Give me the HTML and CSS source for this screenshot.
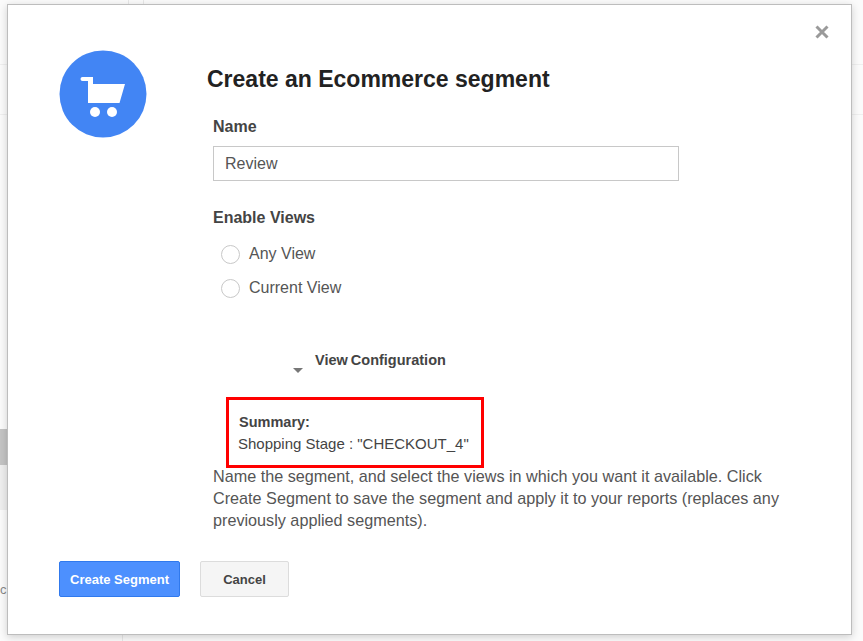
FILE: index.html
```html
<!DOCTYPE html>
<html lang="en">
<head>
<meta charset="utf-8">
<title>Create an Ecommerce segment</title>
<link rel="stylesheet" href="styles.css">
</head>
<body>
<div class="backdrop">
  <div class="bg-line bg-line-a"></div>
  <div class="bg-line bg-line-b"></div>
  <div class="bg-vline bg-vline-a"></div>
  <div class="bg-vline bg-vline-b"></div>
  <div class="bg-vline bg-vline-c"></div>
  <div class="bg-block"></div>
  <div class="bg-panel"></div>
  <span class="bg-letter">c</span>
</div>
<div class="dialog" role="dialog">
  <button class="close" aria-label="Close">
    <svg width="14" height="14" viewBox="0 0 14 14"><path d="M1.5 1.500 12.500 12.500M12.500 1.500 1.500 12.500" stroke="#9a9a9a" stroke-width="3" fill="none"/></svg>
  </button>
  <div class="top">
    <div class="icon-col">
      <svg class="cart" width="88" height="88" viewBox="0 0 88 88">
        <circle cx="44" cy="44" r="43.500" fill="#4285f4"/>
        <path d="M21.500 29a2 2 0 0 1 2-2H34V34H66L60.500 53H29V31H23.500a2 2 0 0 1-2-2Z" fill="#fff"/>
        <circle cx="36" cy="62" r="5" fill="#fff"/>
        <circle cx="53" cy="62" r="5" fill="#fff"/>
      </svg>
    </div>
    <div class="content">
      <h1 class="title">Create an Ecommerce segment</h1>
      <form class="form">
        <label class="field-label" for="name">Name</label>
        <input class="text-input" id="name" value="Review">
        <div class="field-label views-label">Enable Views</div>
        <div class="radio-row"><span class="radio"></span><span>Any View</span></div>
        <div class="radio-row"><span class="radio"></span><span>Current View</span></div>
        <div class="config">
          <span class="caret"></span>
          <span class="config-label">View Configuration</span>
        </div>
        <div class="summary">
          <div class="summary-title">Summary:</div>
          <div class="summary-text">Shopping Stage : "CHECKOUT_4"</div>
        </div>
        <p class="help">Name the segment, and select the views in which you want it available. Click Create Segment to save the segment and apply it to your reports (replaces any previously applied segments).</p>
      </form>
    </div>
  </div>
  <div class="actions">
    <button class="btn btn-primary">Create Segment</button>
    <button class="btn btn-default">Cancel</button>
  </div>
</div>
</body>
</html>
```
FILE: styles.css
```css
* { box-sizing: border-box; }
html, body { margin: 0; height: 100%; }
body {
  position: relative;
  width: 863px;
  height: 641px;
  overflow: hidden;
  background: #fbfbfb;
  font-family: "Liberation Sans", Arial, sans-serif;
  color: #444;
}
.backdrop { position: absolute; inset: 0; }
.bg-line { position: absolute; left: 0; right: 0; height: 1px; background: #efefef; }
.bg-line-a { top: 64px; }
.bg-line-b { top: 114px; }
.bg-vline { position: absolute; width: 1px; background: #e8e8e8; }
.bg-vline-a { left: 128px; top: 0; height: 5px; }
.bg-vline-b { left: 143px; top: 0; height: 5px; }
.bg-vline-c { left: 122px; bottom: 0; height: 8px; }
.bg-block { position: absolute; left: 0; top: 429px; width: 8px; height: 36px; background: #c4c4c4; }
.bg-panel { position: absolute; left: 0; top: 465px; width: 8px; height: 45px; background: #efefef; }
.bg-letter { position: absolute; left: 0; top: 582px; font-size: 13px; color: #888; }
.dialog {
  position: absolute;
  left: 7px;
  top: 4px;
  width: 845px;
  height: 631px;
  background: #fff;
  border: 1px solid #bdbdbd;
  box-shadow: 0 2px 8px rgba(0,0,0,.18);
  padding: 45px 0 0 51px;
}
.close {
  position: absolute;
  top: 20px;
  right: 22px;
  padding: 0;
  border: 0;
  background: none;
  line-height: 0;
}
.top { display: flex; }
.icon-col { width: 148px; flex: none; }
.cart { display: block; }
.content { flex: 1; }
.title {
  margin: 14px 0 0;
  font-size: 23px;
  line-height: 30px;
  font-weight: 700;
  color: #222;
}
.form { padding-left: 6px; }
.field-label {
  display: block;
  margin-top: 23px;
  font-size: 16px;
  line-height: 20px;
  font-weight: 700;
  color: #444;
}
.text-input {
  display: block;
  width: 466px;
  height: 35px;
  margin-top: 9px;
  padding: 0 11px;
  border: 1px solid #c8c8c8;
  background: #fff;
  font: 16px "Liberation Sans", Arial, sans-serif;
  color: #555;
}
.views-label { margin-top: 27px; }
.radio-row {
  display: flex;
  align-items: center;
  gap: 9px;
  height: 20px;
  margin: 16px 0 0 8px;
  font-size: 16px;
  color: #555;
}
.radio-row + .radio-row { margin-top: 14px; }
.radio {
  width: 19px;
  height: 19px;
  border: 1.5px solid #c8c8c8;
  border-radius: 50%;
  background: #fff;
}
.config { display: flex; margin: 52px 0 0 80px; height: 30px; }
.caret {
  width: 0;
  height: 0;
  margin-top: 18px;
  border-left: 5px solid transparent;
  border-right: 5px solid transparent;
  border-top: 5px solid #777;
}
.config-label {
  margin-left: 12px;
  font-size: 14.500px;
  line-height: 20px;
  font-weight: 700;
  word-spacing: -1px;
  color: #444;
}
.summary {
  width: 258px;
  height: 71px;
  margin: 17px 0 0 13px;
  padding: 11px 0 0 10px;
  border: 3px solid #f00;
  font-size: 14.500px;
  line-height: 22px;
  color: #444;
}
.summary-title { font-weight: 700; }
.summary-text { margin-left: -1px; font-size: 15px; }
.help {
  width: 590px;
  margin: -3px 0 0;
  font-size: 16.200px;
  line-height: 22px;
  color: #555;
}
.actions { display: flex; gap: 20px; margin-top: 30px; }
.btn {
  height: 36px;
  padding: 0;
  border-radius: 2px;
  font: 700 13px "Liberation Sans", Arial, sans-serif;
}
.btn-primary { width: 121px; background: #4d90fe; border: 1px solid #3079ed; color: #fff; }
.btn-default { width: 89px; background: #f5f5f5; border: 1px solid #dcdcdc; color: #444; }
```
